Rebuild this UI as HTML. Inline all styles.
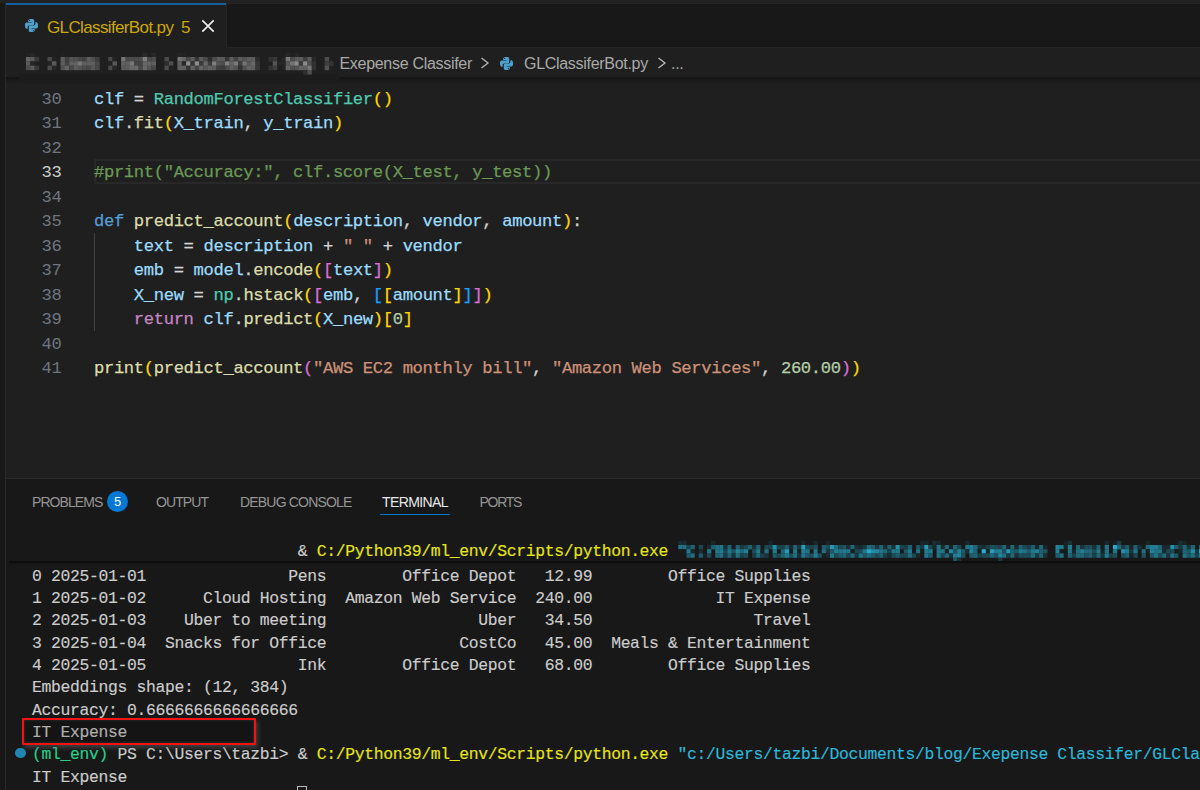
<!DOCTYPE html>
<html><head><meta charset="utf-8">
<style>
*{margin:0;padding:0;box-sizing:border-box}
html,body{width:1200px;height:790px;overflow:hidden;background:#181818}
body{position:relative;font-family:"Liberation Sans",sans-serif}
.abs{position:absolute}
#topstrip{left:0;top:0;width:1200px;height:3px;background:#222222}
#tabbar{left:0;top:3px;width:1200px;height:44px;background:#181818;border-top:1px solid #252525}
#leftstrip{left:0;top:3px;width:5px;height:787px;background:#181818}
#leftborder{left:5px;top:3px;width:1px;height:787px;background:#2b2b2b}
#tab{left:6px;top:3px;width:220px;height:44px;background:#1f1f1f;border-top:2px solid #14609f}
#tabr{left:226px;top:3px;width:1px;height:44px;background:#262626}
#tablabel{left:47px;top:18px;font-size:17px;letter-spacing:-0.63px;color:#cca700;white-space:pre;line-height:20px}
#tab5{left:181px;top:18px;font-size:17px;color:#cca700;line-height:20px}
#editor{left:6px;top:47px;width:1194px;height:431px;background:#1f1f1f}
#bcline{left:227px;top:47px;width:973px;height:1px;background:#262626}
#bcshadow{left:6px;top:77px;width:1194px;height:7px;background:linear-gradient(#141414,rgba(31,31,31,0))}
.bc{top:54px;font-size:16px;color:#a9a9a9;white-space:pre;line-height:20px;letter-spacing:-0.3px}
.code{font-family:"Liberation Mono",monospace;font-size:17.2px;letter-spacing:-0.36px;-webkit-text-stroke:0.25px currentColor;white-space:pre;line-height:24.5px;color:#d4d4d4}
.ln{left:41.5px;color:#6e7681;-webkit-text-stroke:0}.ln.act{color:#cccccc}
.cl{left:94px}
.v{color:#9cdcfe}.f{color:#dcdcaa}.c{color:#4ec9b0}.k{color:#569cd6}.r{color:#c586c0}.s{color:#ce9178}.n{color:#b5cea8}.cm{color:#6a9955}
.b1{color:#ffd700}.b2{color:#da70d6}.b3{color:#179fff}
#curline{left:94px;top:159px;width:1107px;height:25px;border:2px solid #282828;border-right:none}
#guide{left:94px;top:233px;width:1px;height:98px;background:#404040}
#panel{left:6px;top:478px;width:1194px;height:312px;background:#181818;border-top:1px solid #2b2b2b}
.ptab{top:493px;font-size:14px;letter-spacing:-0.6px;color:#959595;white-space:pre;line-height:18px}
#badge{left:107px;top:490.5px;width:21px;height:21px;border-radius:50%;background:#0078d4;color:#fff;font-size:13px;text-align:center;line-height:21px}
#tunder{left:380px;top:514px;width:70px;height:1px;background:#0078d4}
.term{font-family:"Liberation Mono",monospace;font-size:16.4px;letter-spacing:-0.342px;-webkit-text-stroke:0.15px currentColor;white-space:pre;line-height:22.35px;color:#cccccc;left:32px}
.ty{color:#e5e510}.tc{color:#29b8db}.tg{color:#23d18b}
#stickyshadow{left:9px;top:560.5px;width:1191px;height:3.5px;background:linear-gradient(#0b0b0b,#0d0d0d 45%,rgba(24,24,24,0))}
#redbox{left:22px;top:718px;width:234px;height:27px;border:2.5px solid #f21212;border-radius:1px;box-shadow:2px 3px 4px rgba(110,110,110,0.45), inset 0 0 3px rgba(90,90,90,0.5);background:rgba(0,0,0,0.15)}
#cursor{left:297px;top:786px;width:10px;height:10px;border:1px solid #bbbbbb}
#dot{left:14.9px;top:747.6px;width:10.8px;height:10.8px;border-radius:50%;background:#2185b3}
</style></head><body>
<div id="topstrip" class="abs"></div>
<div id="tabbar" class="abs"></div>
<div id="leftstrip" class="abs"></div>
<div id="leftborder" class="abs"></div>
<div id="tab" class="abs"></div>
<div id="tabr" class="abs"></div>
<svg class="abs" style="left:24px;top:18px" width="15" height="15" viewBox="0 0 16 16"><path fill="#4da0cc" d="M7.9 1C4.3 1 4.5 2.6 4.5 2.6V4.3h3.5v.5H3.1S1 4.5 1 8s1.8 3.4 1.8 3.4h1.1V9.8S3.8 8 5.7 8h3.4s1.8 0 1.8-1.8V2.8S11.2 1 7.9 1zM6 2a.6.6 0 110 1.2A.6.6 0 016 2z"/><path fill="#4da0cc" d="M8.1 15c3.6 0 3.4-1.6 3.4-1.6v-1.7H8v-.5h4.9S15 11.5 15 8s-1.8-3.4-1.8-3.4h-1.1v1.6S12.2 8 10.3 8H6.9S5.1 8 5.1 9.8v3.4S4.8 15 8.1 15zM10 14a.6.6 0 110-1.2.6.6 0 010 1.2z"/></svg>
<div id="tablabel" class="abs">GLClassiferBot.py</div>
<div id="tab5" class="abs">5</div>
<svg class="abs" style="left:200.5px;top:19px" width="14" height="14" viewBox="0 0 14 14"><path d="M1.3 1.3L12.7 12.7M12.7 1.3L1.3 12.7" stroke="#ececec" stroke-width="1.7"/></svg>

<div id="editor" class="abs"></div>
<div id="bcline" class="abs"></div>
<div id="bcshadow" class="abs"></div>
<div class="abs" style="left:19px;top:74px;width:320px;height:9px;background:#1c1c1c"></div><!--BCBLUR--><svg class="abs" style="left:0;top:0" width="340" height="90"><rect x="25.90" y="52.67" width="4.53" height="4.53" fill="#222222"/><rect x="30.23" y="52.67" width="4.53" height="4.53" fill="#262626"/><rect x="60.54" y="52.67" width="4.53" height="4.53" fill="#222222"/><rect x="142.81" y="52.67" width="4.53" height="4.53" fill="#292929"/><rect x="151.47" y="52.67" width="4.53" height="4.53" fill="#292929"/><rect x="177.45" y="52.67" width="4.53" height="4.53" fill="#252525"/><rect x="181.78" y="52.67" width="4.53" height="4.53" fill="#222222"/><rect x="285.70" y="52.67" width="4.53" height="4.53" fill="#272727"/><rect x="290.03" y="52.67" width="4.53" height="4.53" fill="#212121"/><rect x="294.36" y="52.67" width="4.53" height="4.53" fill="#262626"/><rect x="25.90" y="57.00" width="4.53" height="4.53" fill="#646464"/><rect x="30.23" y="57.00" width="4.53" height="4.53" fill="#5b5b5b"/><rect x="34.56" y="57.00" width="4.53" height="4.53" fill="#393939"/><rect x="47.55" y="57.00" width="4.53" height="4.53" fill="#494949"/><rect x="51.88" y="57.00" width="4.53" height="4.53" fill="#242424"/><rect x="60.54" y="57.00" width="4.53" height="4.53" fill="#5e5e5e"/><rect x="64.87" y="57.00" width="4.53" height="4.53" fill="#414141"/><rect x="69.20" y="57.00" width="4.53" height="4.53" fill="#565656"/><rect x="73.53" y="57.00" width="4.53" height="4.53" fill="#515151"/><rect x="77.86" y="57.00" width="4.53" height="4.53" fill="#474747"/><rect x="82.19" y="57.00" width="4.53" height="4.53" fill="#434343"/><rect x="86.52" y="57.00" width="4.53" height="4.53" fill="#5c5c5c"/><rect x="90.85" y="57.00" width="4.53" height="4.53" fill="#4f4f4f"/><rect x="95.18" y="57.00" width="4.53" height="4.53" fill="#3d3d3d"/><rect x="108.17" y="57.00" width="4.53" height="4.53" fill="#474747"/><rect x="112.50" y="57.00" width="4.53" height="4.53" fill="#222222"/><rect x="121.16" y="57.00" width="4.53" height="4.53" fill="#767676"/><rect x="125.49" y="57.00" width="4.53" height="4.53" fill="#494949"/><rect x="129.82" y="57.00" width="4.53" height="4.53" fill="#4b4b4b"/><rect x="134.15" y="57.00" width="4.53" height="4.53" fill="#4b4b4b"/><rect x="138.48" y="57.00" width="4.53" height="4.53" fill="#4d4d4d"/><rect x="142.81" y="57.00" width="4.53" height="4.53" fill="#7f7f7f"/><rect x="147.14" y="57.00" width="4.53" height="4.53" fill="#494949"/><rect x="151.47" y="57.00" width="4.53" height="4.53" fill="#4d4d4d"/><rect x="164.46" y="57.00" width="4.53" height="4.53" fill="#494949"/><rect x="177.45" y="57.00" width="4.53" height="4.53" fill="#747474"/><rect x="181.78" y="57.00" width="4.53" height="4.53" fill="#646464"/><rect x="186.11" y="57.00" width="4.53" height="4.53" fill="#484848"/><rect x="190.44" y="57.00" width="4.53" height="4.53" fill="#5c5c5c"/><rect x="194.77" y="57.00" width="4.53" height="4.53" fill="#343434"/><rect x="199.10" y="57.00" width="4.53" height="4.53" fill="#5c5c5c"/><rect x="203.43" y="57.00" width="4.53" height="4.53" fill="#494949"/><rect x="207.76" y="57.00" width="4.53" height="4.53" fill="#2d2d2d"/><rect x="212.09" y="57.00" width="4.53" height="4.53" fill="#4b4b4b"/><rect x="216.42" y="57.00" width="4.53" height="4.53" fill="#5c5c5c"/><rect x="220.75" y="57.00" width="4.53" height="4.53" fill="#595959"/><rect x="225.08" y="57.00" width="4.53" height="4.53" fill="#353535"/><rect x="229.41" y="57.00" width="4.53" height="4.53" fill="#5c5c5c"/><rect x="233.74" y="57.00" width="4.53" height="4.53" fill="#424242"/><rect x="238.07" y="57.00" width="4.53" height="4.53" fill="#5b5b5b"/><rect x="242.40" y="57.00" width="4.53" height="4.53" fill="#525252"/><rect x="246.73" y="57.00" width="4.53" height="4.53" fill="#5f5f5f"/><rect x="251.06" y="57.00" width="4.53" height="4.53" fill="#5c5c5c"/><rect x="255.39" y="57.00" width="4.53" height="4.53" fill="#2c2c2c"/><rect x="268.38" y="57.00" width="4.53" height="4.53" fill="#313131"/><rect x="272.71" y="57.00" width="4.53" height="4.53" fill="#393939"/><rect x="281.37" y="57.00" width="4.53" height="4.53" fill="#262626"/><rect x="285.70" y="57.00" width="4.53" height="4.53" fill="#797979"/><rect x="290.03" y="57.00" width="4.53" height="4.53" fill="#4c4c4c"/><rect x="294.36" y="57.00" width="4.53" height="4.53" fill="#5a5a5a"/><rect x="298.69" y="57.00" width="4.53" height="4.53" fill="#5c5c5c"/><rect x="303.02" y="57.00" width="4.53" height="4.53" fill="#3e3e3e"/><rect x="307.35" y="57.00" width="4.53" height="4.53" fill="#5b5b5b"/><rect x="311.68" y="57.00" width="4.53" height="4.53" fill="#282828"/><rect x="324.67" y="57.00" width="4.53" height="4.53" fill="#4c4c4c"/><rect x="25.90" y="61.33" width="4.53" height="4.53" fill="#595959"/><rect x="30.23" y="61.33" width="4.53" height="4.53" fill="#272727"/><rect x="47.55" y="61.33" width="4.53" height="4.53" fill="#232323"/><rect x="51.88" y="61.33" width="4.53" height="4.53" fill="#5b5b5b"/><rect x="60.54" y="61.33" width="4.53" height="4.53" fill="#5f5f5f"/><rect x="64.87" y="61.33" width="4.53" height="4.53" fill="#434343"/><rect x="69.20" y="61.33" width="4.53" height="4.53" fill="#616161"/><rect x="73.53" y="61.33" width="4.53" height="4.53" fill="#626262"/><rect x="77.86" y="61.33" width="4.53" height="4.53" fill="#787878"/><rect x="82.19" y="61.33" width="4.53" height="4.53" fill="#5f5f5f"/><rect x="86.52" y="61.33" width="4.53" height="4.53" fill="#5e5e5e"/><rect x="90.85" y="61.33" width="4.53" height="4.53" fill="#5e5e5e"/><rect x="95.18" y="61.33" width="4.53" height="4.53" fill="#494949"/><rect x="108.17" y="61.33" width="4.53" height="4.53" fill="#222222"/><rect x="112.50" y="61.33" width="4.53" height="4.53" fill="#575757"/><rect x="121.16" y="61.33" width="4.53" height="4.53" fill="#626262"/><rect x="125.49" y="61.33" width="4.53" height="4.53" fill="#606060"/><rect x="129.82" y="61.33" width="4.53" height="4.53" fill="#787878"/><rect x="134.15" y="61.33" width="4.53" height="4.53" fill="#464646"/><rect x="138.48" y="61.33" width="4.53" height="4.53" fill="#454545"/><rect x="142.81" y="61.33" width="4.53" height="4.53" fill="#666666"/><rect x="147.14" y="61.33" width="4.53" height="4.53" fill="#656565"/><rect x="151.47" y="61.33" width="4.53" height="4.53" fill="#5f5f5f"/><rect x="164.46" y="61.33" width="4.53" height="4.53" fill="#2e2e2e"/><rect x="168.79" y="61.33" width="4.53" height="4.53" fill="#4e4e4e"/><rect x="177.45" y="61.33" width="4.53" height="4.53" fill="#616161"/><rect x="181.78" y="61.33" width="4.53" height="4.53" fill="#292929"/><rect x="186.11" y="61.33" width="4.53" height="4.53" fill="#8d8d8d"/><rect x="190.44" y="61.33" width="4.53" height="4.53" fill="#363636"/><rect x="194.77" y="61.33" width="4.53" height="4.53" fill="#8d8d8d"/><rect x="199.10" y="61.33" width="4.53" height="4.53" fill="#3b3b3b"/><rect x="203.43" y="61.33" width="4.53" height="4.53" fill="#696969"/><rect x="207.76" y="61.33" width="4.53" height="4.53" fill="#3e3e3e"/><rect x="212.09" y="61.33" width="4.53" height="4.53" fill="#7e7e7e"/><rect x="216.42" y="61.33" width="4.53" height="4.53" fill="#545454"/><rect x="220.75" y="61.33" width="4.53" height="4.53" fill="#4f4f4f"/><rect x="225.08" y="61.33" width="4.53" height="4.53" fill="#808080"/><rect x="229.41" y="61.33" width="4.53" height="4.53" fill="#636363"/><rect x="233.74" y="61.33" width="4.53" height="4.53" fill="#797979"/><rect x="238.07" y="61.33" width="4.53" height="4.53" fill="#3f3f3f"/><rect x="242.40" y="61.33" width="4.53" height="4.53" fill="#747474"/><rect x="246.73" y="61.33" width="4.53" height="4.53" fill="#575757"/><rect x="251.06" y="61.33" width="4.53" height="4.53" fill="#696969"/><rect x="255.39" y="61.33" width="4.53" height="4.53" fill="#363636"/><rect x="272.71" y="61.33" width="4.53" height="4.53" fill="#545454"/><rect x="277.04" y="61.33" width="4.53" height="4.53" fill="#262626"/><rect x="281.37" y="61.33" width="4.53" height="4.53" fill="#262626"/><rect x="285.70" y="61.33" width="4.53" height="4.53" fill="#575757"/><rect x="290.03" y="61.33" width="4.53" height="4.53" fill="#737373"/><rect x="294.36" y="61.33" width="4.53" height="4.53" fill="#8a8a8a"/><rect x="298.69" y="61.33" width="4.53" height="4.53" fill="#3b3b3b"/><rect x="303.02" y="61.33" width="4.53" height="4.53" fill="#898989"/><rect x="307.35" y="61.33" width="4.53" height="4.53" fill="#4e4e4e"/><rect x="311.68" y="61.33" width="4.53" height="4.53" fill="#323232"/><rect x="324.67" y="61.33" width="4.53" height="4.53" fill="#3e3e3e"/><rect x="329.00" y="61.33" width="4.53" height="4.53" fill="#353535"/><rect x="25.90" y="65.66" width="4.53" height="4.53" fill="#4f4f4f"/><rect x="30.23" y="65.66" width="4.53" height="4.53" fill="#5b5b5b"/><rect x="34.56" y="65.66" width="4.53" height="4.53" fill="#393939"/><rect x="47.55" y="65.66" width="4.53" height="4.53" fill="#4c4c4c"/><rect x="51.88" y="65.66" width="4.53" height="4.53" fill="#282828"/><rect x="60.54" y="65.66" width="4.53" height="4.53" fill="#515151"/><rect x="64.87" y="65.66" width="4.53" height="4.53" fill="#626262"/><rect x="69.20" y="65.66" width="4.53" height="4.53" fill="#484848"/><rect x="73.53" y="65.66" width="4.53" height="4.53" fill="#5d5d5d"/><rect x="77.86" y="65.66" width="4.53" height="4.53" fill="#535353"/><rect x="82.19" y="65.66" width="4.53" height="4.53" fill="#4c4c4c"/><rect x="86.52" y="65.66" width="4.53" height="4.53" fill="#464646"/><rect x="90.85" y="65.66" width="4.53" height="4.53" fill="#585858"/><rect x="95.18" y="65.66" width="4.53" height="4.53" fill="#484848"/><rect x="108.17" y="65.66" width="4.53" height="4.53" fill="#494949"/><rect x="112.50" y="65.66" width="4.53" height="4.53" fill="#272727"/><rect x="121.16" y="65.66" width="4.53" height="4.53" fill="#5b5b5b"/><rect x="125.49" y="65.66" width="4.53" height="4.53" fill="#5e5e5e"/><rect x="129.82" y="65.66" width="4.53" height="4.53" fill="#696969"/><rect x="134.15" y="65.66" width="4.53" height="4.53" fill="#6b6b6b"/><rect x="138.48" y="65.66" width="4.53" height="4.53" fill="#484848"/><rect x="142.81" y="65.66" width="4.53" height="4.53" fill="#686868"/><rect x="147.14" y="65.66" width="4.53" height="4.53" fill="#555555"/><rect x="151.47" y="65.66" width="4.53" height="4.53" fill="#484848"/><rect x="164.46" y="65.66" width="4.53" height="4.53" fill="#4d4d4d"/><rect x="168.79" y="65.66" width="4.53" height="4.53" fill="#222222"/><rect x="177.45" y="65.66" width="4.53" height="4.53" fill="#606060"/><rect x="181.78" y="65.66" width="4.53" height="4.53" fill="#606060"/><rect x="186.11" y="65.66" width="4.53" height="4.53" fill="#363636"/><rect x="190.44" y="65.66" width="4.53" height="4.53" fill="#626262"/><rect x="194.77" y="65.66" width="4.53" height="4.53" fill="#454545"/><rect x="199.10" y="65.66" width="4.53" height="4.53" fill="#656565"/><rect x="203.43" y="65.66" width="4.53" height="4.53" fill="#575757"/><rect x="207.76" y="65.66" width="4.53" height="4.53" fill="#626262"/><rect x="212.09" y="65.66" width="4.53" height="4.53" fill="#5c5c5c"/><rect x="216.42" y="65.66" width="4.53" height="4.53" fill="#404040"/><rect x="220.75" y="65.66" width="4.53" height="4.53" fill="#3c3c3c"/><rect x="225.08" y="65.66" width="4.53" height="4.53" fill="#4c4c4c"/><rect x="229.41" y="65.66" width="4.53" height="4.53" fill="#606060"/><rect x="233.74" y="65.66" width="4.53" height="4.53" fill="#545454"/><rect x="238.07" y="65.66" width="4.53" height="4.53" fill="#323232"/><rect x="242.40" y="65.66" width="4.53" height="4.53" fill="#525252"/><rect x="246.73" y="65.66" width="4.53" height="4.53" fill="#636363"/><rect x="251.06" y="65.66" width="4.53" height="4.53" fill="#5e5e5e"/><rect x="255.39" y="65.66" width="4.53" height="4.53" fill="#373737"/><rect x="268.38" y="65.66" width="4.53" height="4.53" fill="#313131"/><rect x="272.71" y="65.66" width="4.53" height="4.53" fill="#404040"/><rect x="281.37" y="65.66" width="4.53" height="4.53" fill="#242424"/><rect x="285.70" y="65.66" width="4.53" height="4.53" fill="#666666"/><rect x="290.03" y="65.66" width="4.53" height="4.53" fill="#515151"/><rect x="294.36" y="65.66" width="4.53" height="4.53" fill="#535353"/><rect x="298.69" y="65.66" width="4.53" height="4.53" fill="#636363"/><rect x="303.02" y="65.66" width="4.53" height="4.53" fill="#5f5f5f"/><rect x="307.35" y="65.66" width="4.53" height="4.53" fill="#777777"/><rect x="311.68" y="65.66" width="4.53" height="4.53" fill="#303030"/><rect x="324.67" y="65.66" width="4.53" height="4.53" fill="#535353"/><rect x="303.02" y="69.99" width="4.53" height="4.53" fill="#2e2e2e"/><rect x="307.35" y="69.99" width="4.53" height="4.53" fill="#4e4e4e"/></svg><!--/BCBLUR-->
<div class="abs bc" style="left:339.5px">Exepense Classifer</div>
<div class="abs bc" style="left:524px">GLClassiferBot.py</div>
<svg class="abs" style="left:479px;top:56px" width="12" height="14" viewBox="0 0 12 14"><path d="M2.5 2L9 7L2.5 12" fill="none" stroke="#b8b8b8" stroke-width="1.3"/></svg>
<svg class="abs" style="left:499px;top:56px" width="15" height="15" viewBox="0 0 16 16"><path fill="#4da0cc" d="M7.9 1C4.3 1 4.5 2.6 4.5 2.6V4.3h3.5v.5H3.1S1 4.5 1 8s1.8 3.4 1.8 3.4h1.1V9.8S3.8 8 5.7 8h3.4s1.8 0 1.8-1.8V2.8S11.2 1 7.9 1zM6 2a.6.6 0 110 1.2A.6.6 0 016 2z"/><path fill="#4da0cc" d="M8.1 15c3.6 0 3.4-1.6 3.4-1.6v-1.7H8v-.5h4.9S15 11.5 15 8s-1.8-3.4-1.8-3.4h-1.1v1.6S12.2 8 10.3 8H6.9S5.1 8 5.1 9.8v3.4S4.8 15 8.1 15zM10 14a.6.6 0 110-1.2.6.6 0 010 1.2z"/></svg>
<svg class="abs" style="left:656px;top:56px" width="12" height="14" viewBox="0 0 12 14"><path d="M2.5 2L9 7L2.5 12" fill="none" stroke="#b8b8b8" stroke-width="1.3"/></svg>
<div class="abs bc" style="left:671px">...</div>


<div id="curline" class="abs"></div>
<div id="guide" class="abs"></div>
<!--CODE-->
<div class="abs code ln" style="top:87.57px">30</div>
<div class="abs code cl" style="top:87.57px"><span class="v">clf</span> = <span class="c">RandomForestClassifier</span><span class="b1">()</span></div>
<div class="abs code ln" style="top:112.07px">31</div>
<div class="abs code cl" style="top:112.07px"><span class="v">clf</span>.<span class="f">fit</span><span class="b1">(</span><span class="v">X_train</span>, <span class="v">y_train</span><span class="b1">)</span></div>
<div class="abs code ln" style="top:136.57px">32</div>
<div class="abs code ln act" style="top:161.07px">33</div>
<div class="abs code cl" style="top:161.07px"><span class="cm">#print(&quot;Accuracy:&quot;, clf.score(X_test, y_test))</span></div>
<div class="abs code ln" style="top:185.57px">34</div>
<div class="abs code ln" style="top:210.07px">35</div>
<div class="abs code cl" style="top:210.07px"><span class="k">def</span> <span class="f">predict_account</span><span class="b1">(</span><span class="v">description</span>, <span class="v">vendor</span>, <span class="v">amount</span><span class="b1">)</span>:</div>
<div class="abs code ln" style="top:234.57px">36</div>
<div class="abs code cl" style="top:234.57px">    <span class="v">text</span> = <span class="v">description</span> + <span class="s">&quot; &quot;</span> + <span class="v">vendor</span></div>
<div class="abs code ln" style="top:259.07px">37</div>
<div class="abs code cl" style="top:259.07px">    <span class="v">emb</span> = <span class="v">model</span>.<span class="f">encode</span><span class="b1">(</span><span class="b2">[</span><span class="v">text</span><span class="b2">]</span><span class="b1">)</span></div>
<div class="abs code ln" style="top:283.57px">38</div>
<div class="abs code cl" style="top:283.57px">    <span class="v">X_new</span> = <span class="c">np</span>.<span class="f">hstack</span><span class="b1">(</span><span class="b2">[</span><span class="v">emb</span>, <span class="b3">[</span><span class="b1">[</span><span class="v">amount</span><span class="b1">]</span><span class="b3">]</span><span class="b2">]</span><span class="b1">)</span></div>
<div class="abs code ln" style="top:308.07px">39</div>
<div class="abs code cl" style="top:308.07px">    <span class="r">return</span> <span class="v">clf</span>.<span class="f">predict</span><span class="b1">(</span><span class="v">X_new</span><span class="b1">)</span><span class="b1">[</span><span class="n">0</span><span class="b1">]</span></div>
<div class="abs code ln" style="top:332.57px">40</div>
<div class="abs code ln" style="top:357.07px">41</div>
<div class="abs code cl" style="top:357.07px"><span class="f">print</span><span class="b1">(</span><span class="f">predict_account</span><span class="b2">(</span><span class="s">&quot;AWS EC2 monthly bill&quot;</span>, <span class="s">&quot;Amazon Web Services&quot;</span>, <span class="n">260.00</span><span class="b2">)</span><span class="b1">)</span></div>
<!--/CODE-->

<div id="panel" class="abs"></div>
<div class="abs ptab" style="left:32px;letter-spacing:-0.94px">PROBLEMS</div>
<div id="badge" class="abs">5</div>
<div class="abs ptab" style="left:156px;letter-spacing:-0.92px">OUTPUT</div>
<div class="abs ptab" style="left:240px;letter-spacing:-0.81px">DEBUG CONSOLE</div>
<div class="abs ptab" style="left:382px;color:#e7e7e7">TERMINAL</div>
<div class="abs ptab" style="left:479.5px;letter-spacing:-1.26px">PORTS</div>
<div id="tunder" class="abs"></div>

<!--TERM-->
<div class="abs term" style="top:540.96px">                            &amp; <span class="ty">C:/Python39/ml_env/Scripts/python.exe</span> </div>
<div class="abs term" style="top:565.56px">0 2025-01-01               Pens        Office Depot   12.99        Office Supplies</div>
<div class="abs term" style="top:587.91px">1 2025-01-02      Cloud Hosting  Amazon Web Service  240.00             IT Expense</div>
<div class="abs term" style="top:610.26px">2 2025-01-03    Uber to meeting                Uber   34.50                 Travel</div>
<div class="abs term" style="top:632.61px">3 2025-01-04  Snacks for Office              CostCo   45.00  Meals &amp; Entertainment</div>
<div class="abs term" style="top:654.96px">4 2025-01-05                Ink        Office Depot   68.00        Office Supplies</div>
<div class="abs term" style="top:677.31px">Embeddings shape: (12, 384)</div>
<div class="abs term" style="top:699.66px">Accuracy: 0.6666666666666666</div>
<div class="abs term" style="top:722.01px">IT Expense</div>
<div class="abs term" style="top:744.36px"><span class="tg">(ml_env)</span> PS C:\Users\tazbi&gt; &amp; <span class="ty">C:/Python39/ml_env/Scripts/python.exe</span> <span class="tc">&quot;c:/Users/tazbi/Documents/blog/Exepense Classifer/GLClassiferBot.py&quot;</span></div>
<div class="abs term" style="top:766.71px">IT Expense</div>
<!--/TERM-->
<!--TBLUR--><svg class="abs" style="left:0;top:0" width="1200" height="600"><rect x="678.30" y="540.80" width="4.30" height="4.40" fill="#1a2c30"/><rect x="682.40" y="540.80" width="4.30" height="4.40" fill="#1a2a2f"/><rect x="711.10" y="540.80" width="4.30" height="4.40" fill="#19282c"/><rect x="768.50" y="540.80" width="4.30" height="4.40" fill="#19282c"/><rect x="801.30" y="540.80" width="4.30" height="4.40" fill="#19282c"/><rect x="813.60" y="540.80" width="4.30" height="4.40" fill="#19292d"/><rect x="825.90" y="540.80" width="4.30" height="4.40" fill="#19262a"/><rect x="920.20" y="540.80" width="4.30" height="4.40" fill="#19282b"/><rect x="924.30" y="540.80" width="4.30" height="4.40" fill="#19272b"/><rect x="932.50" y="540.80" width="4.30" height="4.40" fill="#1a2f34"/><rect x="936.60" y="540.80" width="4.30" height="4.40" fill="#19262a"/><rect x="965.30" y="540.80" width="4.30" height="4.40" fill="#19282c"/><rect x="1063.70" y="540.80" width="4.30" height="4.40" fill="#192326"/><rect x="1067.80" y="540.80" width="4.30" height="4.40" fill="#1a3137"/><rect x="1104.70" y="540.80" width="4.30" height="4.40" fill="#19292d"/><rect x="1112.90" y="540.80" width="4.30" height="4.40" fill="#181f21"/><rect x="1117.00" y="540.80" width="4.30" height="4.40" fill="#1b3c43"/><rect x="1145.70" y="540.80" width="4.30" height="4.40" fill="#19272a"/><rect x="1178.50" y="540.80" width="4.30" height="4.40" fill="#1a3137"/><rect x="1182.60" y="540.80" width="4.30" height="4.40" fill="#192427"/><rect x="678.30" y="545.00" width="4.30" height="4.40" fill="#217589"/><rect x="682.40" y="545.00" width="4.30" height="4.40" fill="#217083"/><rect x="686.50" y="545.00" width="4.30" height="4.40" fill="#1c414a"/><rect x="690.60" y="545.00" width="4.30" height="4.40" fill="#1f6171"/><rect x="698.80" y="545.00" width="4.30" height="4.40" fill="#1c4650"/><rect x="707.00" y="545.00" width="4.30" height="4.40" fill="#1a2b2f"/><rect x="711.10" y="545.00" width="4.30" height="4.40" fill="#1f6172"/><rect x="715.20" y="545.00" width="4.30" height="4.40" fill="#217083"/><rect x="719.30" y="545.00" width="4.30" height="4.40" fill="#217589"/><rect x="723.40" y="545.00" width="4.30" height="4.40" fill="#1a3035"/><rect x="727.50" y="545.00" width="4.30" height="4.40" fill="#206374"/><rect x="731.60" y="545.00" width="4.30" height="4.40" fill="#181e1f"/><rect x="735.70" y="545.00" width="4.30" height="4.40" fill="#1f6170"/><rect x="739.80" y="545.00" width="4.30" height="4.40" fill="#1b383f"/><rect x="743.90" y="545.00" width="4.30" height="4.40" fill="#1c444e"/><rect x="748.00" y="545.00" width="4.30" height="4.40" fill="#1f6070"/><rect x="752.10" y="545.00" width="4.30" height="4.40" fill="#1a3237"/><rect x="756.20" y="545.00" width="4.30" height="4.40" fill="#1f6272"/><rect x="764.40" y="545.00" width="4.30" height="4.40" fill="#1d4852"/><rect x="768.50" y="545.00" width="4.30" height="4.40" fill="#1c424b"/><rect x="772.60" y="545.00" width="4.30" height="4.40" fill="#248fa9"/><rect x="776.70" y="545.00" width="4.30" height="4.40" fill="#1c434c"/><rect x="780.80" y="545.00" width="4.30" height="4.40" fill="#1c4049"/><rect x="784.90" y="545.00" width="4.30" height="4.40" fill="#1e5967"/><rect x="789.00" y="545.00" width="4.30" height="4.40" fill="#1a2b2f"/><rect x="793.10" y="545.00" width="4.30" height="4.40" fill="#206373"/><rect x="797.20" y="545.00" width="4.30" height="4.40" fill="#1b3840"/><rect x="801.30" y="545.00" width="4.30" height="4.40" fill="#269dbb"/><rect x="805.40" y="545.00" width="4.30" height="4.40" fill="#1d4954"/><rect x="809.50" y="545.00" width="4.30" height="4.40" fill="#1c444e"/><rect x="813.60" y="545.00" width="4.30" height="4.40" fill="#1d4f5b"/><rect x="821.80" y="545.00" width="4.30" height="4.40" fill="#1f6070"/><rect x="825.90" y="545.00" width="4.30" height="4.40" fill="#1d4a55"/><rect x="830.00" y="545.00" width="4.30" height="4.40" fill="#2595b0"/><rect x="834.10" y="545.00" width="4.30" height="4.40" fill="#216d80"/><rect x="838.20" y="545.00" width="4.30" height="4.40" fill="#1d4853"/><rect x="842.30" y="545.00" width="4.30" height="4.40" fill="#1e5461"/><rect x="846.40" y="545.00" width="4.30" height="4.40" fill="#1a3035"/><rect x="850.50" y="545.00" width="4.30" height="4.40" fill="#20687a"/><rect x="854.60" y="545.00" width="4.30" height="4.40" fill="#1a2f34"/><rect x="858.70" y="545.00" width="4.30" height="4.40" fill="#1a2b2f"/><rect x="862.80" y="545.00" width="4.30" height="4.40" fill="#1b3b43"/><rect x="866.90" y="545.00" width="4.30" height="4.40" fill="#206c7e"/><rect x="871.00" y="545.00" width="4.30" height="4.40" fill="#1f5b6a"/><rect x="875.10" y="545.00" width="4.30" height="4.40" fill="#1b383f"/><rect x="879.20" y="545.00" width="4.30" height="4.40" fill="#1f6171"/><rect x="883.30" y="545.00" width="4.30" height="4.40" fill="#1a2d32"/><rect x="887.40" y="545.00" width="4.30" height="4.40" fill="#1f6172"/><rect x="891.50" y="545.00" width="4.30" height="4.40" fill="#1a3238"/><rect x="895.60" y="545.00" width="4.30" height="4.40" fill="#248fa9"/><rect x="899.70" y="545.00" width="4.30" height="4.40" fill="#1c434c"/><rect x="903.80" y="545.00" width="4.30" height="4.40" fill="#1b3b43"/><rect x="907.90" y="545.00" width="4.30" height="4.40" fill="#1f5f6f"/><rect x="916.10" y="545.00" width="4.30" height="4.40" fill="#1e5663"/><rect x="920.20" y="545.00" width="4.30" height="4.40" fill="#1b3a42"/><rect x="924.30" y="545.00" width="4.30" height="4.40" fill="#269dba"/><rect x="928.40" y="545.00" width="4.30" height="4.40" fill="#1d4752"/><rect x="932.50" y="545.00" width="4.30" height="4.40" fill="#19282b"/><rect x="936.60" y="545.00" width="4.30" height="4.40" fill="#22768a"/><rect x="940.70" y="545.00" width="4.30" height="4.40" fill="#1a2c30"/><rect x="944.80" y="545.00" width="4.30" height="4.40" fill="#206879"/><rect x="948.90" y="545.00" width="4.30" height="4.40" fill="#192225"/><rect x="953.00" y="545.00" width="4.30" height="4.40" fill="#206475"/><rect x="957.10" y="545.00" width="4.30" height="4.40" fill="#1c4751"/><rect x="965.30" y="545.00" width="4.30" height="4.40" fill="#217589"/><rect x="969.40" y="545.00" width="4.30" height="4.40" fill="#238097"/><rect x="973.50" y="545.00" width="4.30" height="4.40" fill="#20697b"/><rect x="977.60" y="545.00" width="4.30" height="4.40" fill="#1b373d"/><rect x="981.70" y="545.00" width="4.30" height="4.40" fill="#1a2f34"/><rect x="985.80" y="545.00" width="4.30" height="4.40" fill="#1b3d45"/><rect x="989.90" y="545.00" width="4.30" height="4.40" fill="#1d4f5b"/><rect x="994.00" y="545.00" width="4.30" height="4.40" fill="#1d4a55"/><rect x="998.10" y="545.00" width="4.30" height="4.40" fill="#1c434c"/><rect x="1002.20" y="545.00" width="4.30" height="4.40" fill="#206677"/><rect x="1006.30" y="545.00" width="4.30" height="4.40" fill="#192325"/><rect x="1010.40" y="545.00" width="4.30" height="4.40" fill="#206778"/><rect x="1014.50" y="545.00" width="4.30" height="4.40" fill="#19272a"/><rect x="1018.60" y="545.00" width="4.30" height="4.40" fill="#1f6070"/><rect x="1022.70" y="545.00" width="4.30" height="4.40" fill="#1d4a55"/><rect x="1026.80" y="545.00" width="4.30" height="4.40" fill="#1c4048"/><rect x="1030.90" y="545.00" width="4.30" height="4.40" fill="#1f5b6a"/><rect x="1035.00" y="545.00" width="4.30" height="4.40" fill="#19272a"/><rect x="1039.10" y="545.00" width="4.30" height="4.40" fill="#206779"/><rect x="1043.20" y="545.00" width="4.30" height="4.40" fill="#192629"/><rect x="1055.50" y="545.00" width="4.30" height="4.40" fill="#23849c"/><rect x="1059.60" y="545.00" width="4.30" height="4.40" fill="#227b91"/><rect x="1063.70" y="545.00" width="4.30" height="4.40" fill="#192224"/><rect x="1067.80" y="545.00" width="4.30" height="4.40" fill="#227d93"/><rect x="1076.00" y="545.00" width="4.30" height="4.40" fill="#206778"/><rect x="1080.10" y="545.00" width="4.30" height="4.40" fill="#1a3238"/><rect x="1084.20" y="545.00" width="4.30" height="4.40" fill="#1d4a55"/><rect x="1088.30" y="545.00" width="4.30" height="4.40" fill="#1d4e5a"/><rect x="1092.40" y="545.00" width="4.30" height="4.40" fill="#1a3237"/><rect x="1096.50" y="545.00" width="4.30" height="4.40" fill="#1f6272"/><rect x="1100.60" y="545.00" width="4.30" height="4.40" fill="#181c1d"/><rect x="1104.70" y="545.00" width="4.30" height="4.40" fill="#217488"/><rect x="1112.90" y="545.00" width="4.30" height="4.40" fill="#27a8c8"/><rect x="1117.00" y="545.00" width="4.30" height="4.40" fill="#206779"/><rect x="1121.10" y="545.00" width="4.30" height="4.40" fill="#1b3d45"/><rect x="1125.20" y="545.00" width="4.30" height="4.40" fill="#1f5c6b"/><rect x="1129.30" y="545.00" width="4.30" height="4.40" fill="#192427"/><rect x="1133.40" y="545.00" width="4.30" height="4.40" fill="#1f6171"/><rect x="1137.50" y="545.00" width="4.30" height="4.40" fill="#1a343a"/><rect x="1141.60" y="545.00" width="4.30" height="4.40" fill="#181d1f"/><rect x="1145.70" y="545.00" width="4.30" height="4.40" fill="#206a7c"/><rect x="1149.80" y="545.00" width="4.30" height="4.40" fill="#227f95"/><rect x="1153.90" y="545.00" width="4.30" height="4.40" fill="#227c92"/><rect x="1158.00" y="545.00" width="4.30" height="4.40" fill="#206474"/><rect x="1162.10" y="545.00" width="4.30" height="4.40" fill="#192a2e"/><rect x="1166.20" y="545.00" width="4.30" height="4.40" fill="#1a2b2f"/><rect x="1170.30" y="545.00" width="4.30" height="4.40" fill="#248fa9"/><rect x="1174.40" y="545.00" width="4.30" height="4.40" fill="#1f5e6e"/><rect x="1178.50" y="545.00" width="4.30" height="4.40" fill="#1b373e"/><rect x="1182.60" y="545.00" width="4.30" height="4.40" fill="#206678"/><rect x="1186.70" y="545.00" width="4.30" height="4.40" fill="#1b343b"/><rect x="1190.80" y="545.00" width="4.30" height="4.40" fill="#206576"/><rect x="1199.00" y="545.00" width="4.30" height="4.40" fill="#206373"/><rect x="678.30" y="549.20" width="4.30" height="4.40" fill="#181c1d"/><rect x="682.40" y="549.20" width="4.30" height="4.40" fill="#181c1d"/><rect x="686.50" y="549.20" width="4.30" height="4.40" fill="#227a90"/><rect x="690.60" y="549.20" width="4.30" height="4.40" fill="#19272a"/><rect x="698.80" y="549.20" width="4.30" height="4.40" fill="#1a2d32"/><rect x="707.00" y="549.20" width="4.30" height="4.40" fill="#217589"/><rect x="715.20" y="549.20" width="4.30" height="4.40" fill="#22768a"/><rect x="719.30" y="549.20" width="4.30" height="4.40" fill="#227b91"/><rect x="723.40" y="549.20" width="4.30" height="4.40" fill="#1d4853"/><rect x="727.50" y="549.20" width="4.30" height="4.40" fill="#22778b"/><rect x="731.60" y="549.20" width="4.30" height="4.40" fill="#1e5360"/><rect x="735.70" y="549.20" width="4.30" height="4.40" fill="#23859d"/><rect x="739.80" y="549.20" width="4.30" height="4.40" fill="#20687a"/><rect x="743.90" y="549.20" width="4.30" height="4.40" fill="#237f96"/><rect x="752.10" y="549.20" width="4.30" height="4.40" fill="#1d4b56"/><rect x="756.20" y="549.20" width="4.30" height="4.40" fill="#22788d"/><rect x="760.30" y="549.20" width="4.30" height="4.40" fill="#192326"/><rect x="764.40" y="549.20" width="4.30" height="4.40" fill="#217084"/><rect x="772.60" y="549.20" width="4.30" height="4.40" fill="#21768a"/><rect x="780.80" y="549.20" width="4.30" height="4.40" fill="#206576"/><rect x="784.90" y="549.20" width="4.30" height="4.40" fill="#2598b4"/><rect x="793.10" y="549.20" width="4.30" height="4.40" fill="#22768b"/><rect x="797.20" y="549.20" width="4.30" height="4.40" fill="#192123"/><rect x="801.30" y="549.20" width="4.30" height="4.40" fill="#227f96"/><rect x="805.40" y="549.20" width="4.30" height="4.40" fill="#217489"/><rect x="813.60" y="549.20" width="4.30" height="4.40" fill="#22768a"/><rect x="817.70" y="549.20" width="4.30" height="4.40" fill="#181d1f"/><rect x="821.80" y="549.20" width="4.30" height="4.40" fill="#217083"/><rect x="825.90" y="549.20" width="4.30" height="4.40" fill="#1b383f"/><rect x="830.00" y="549.20" width="4.30" height="4.40" fill="#1f5968"/><rect x="834.10" y="549.20" width="4.30" height="4.40" fill="#227d93"/><rect x="838.20" y="549.20" width="4.30" height="4.40" fill="#21758a"/><rect x="842.30" y="549.20" width="4.30" height="4.40" fill="#227b91"/><rect x="846.40" y="549.20" width="4.30" height="4.40" fill="#217489"/><rect x="850.50" y="549.20" width="4.30" height="4.40" fill="#181e20"/><rect x="854.60" y="549.20" width="4.30" height="4.40" fill="#1d4954"/><rect x="858.70" y="549.20" width="4.30" height="4.40" fill="#1d4b57"/><rect x="862.80" y="549.20" width="4.30" height="4.40" fill="#22778b"/><rect x="866.90" y="549.20" width="4.30" height="4.40" fill="#27a9c9"/><rect x="871.00" y="549.20" width="4.30" height="4.40" fill="#248ca5"/><rect x="875.10" y="549.20" width="4.30" height="4.40" fill="#248aa3"/><rect x="879.20" y="549.20" width="4.30" height="4.40" fill="#21758a"/><rect x="883.30" y="549.20" width="4.30" height="4.40" fill="#206779"/><rect x="887.40" y="549.20" width="4.30" height="4.40" fill="#1c414a"/><rect x="891.50" y="549.20" width="4.30" height="4.40" fill="#22778c"/><rect x="895.60" y="549.20" width="4.30" height="4.40" fill="#21768a"/><rect x="903.80" y="549.20" width="4.30" height="4.40" fill="#1e5664"/><rect x="907.90" y="549.20" width="4.30" height="4.40" fill="#22798e"/><rect x="912.00" y="549.20" width="4.30" height="4.40" fill="#181b1b"/><rect x="916.10" y="549.20" width="4.30" height="4.40" fill="#217488"/><rect x="920.20" y="549.20" width="4.30" height="4.40" fill="#181d1e"/><rect x="924.30" y="549.20" width="4.30" height="4.40" fill="#227a8f"/><rect x="928.40" y="549.20" width="4.30" height="4.40" fill="#227a90"/><rect x="936.60" y="549.20" width="4.30" height="4.40" fill="#21768a"/><rect x="940.70" y="549.20" width="4.30" height="4.40" fill="#21758a"/><rect x="944.80" y="549.20" width="4.30" height="4.40" fill="#192124"/><rect x="948.90" y="549.20" width="4.30" height="4.40" fill="#23879f"/><rect x="953.00" y="549.20" width="4.30" height="4.40" fill="#1e5361"/><rect x="957.10" y="549.20" width="4.30" height="4.40" fill="#238096"/><rect x="961.20" y="549.20" width="4.30" height="4.40" fill="#1f5a68"/><rect x="965.30" y="549.20" width="4.30" height="4.40" fill="#1a3035"/><rect x="969.40" y="549.20" width="4.30" height="4.40" fill="#23869e"/><rect x="973.50" y="549.20" width="4.30" height="4.40" fill="#206374"/><rect x="977.60" y="549.20" width="4.30" height="4.40" fill="#181e20"/><rect x="981.70" y="549.20" width="4.30" height="4.40" fill="#28aecf"/><rect x="985.80" y="549.20" width="4.30" height="4.40" fill="#19282c"/><rect x="989.90" y="549.20" width="4.30" height="4.40" fill="#269fbd"/><rect x="994.00" y="549.20" width="4.30" height="4.40" fill="#22798e"/><rect x="998.10" y="549.20" width="4.30" height="4.40" fill="#237f96"/><rect x="1002.20" y="549.20" width="4.30" height="4.40" fill="#1e515e"/><rect x="1006.30" y="549.20" width="4.30" height="4.40" fill="#2598b4"/><rect x="1010.40" y="549.20" width="4.30" height="4.40" fill="#1f6272"/><rect x="1014.50" y="549.20" width="4.30" height="4.40" fill="#1f5a68"/><rect x="1018.60" y="549.20" width="4.30" height="4.40" fill="#227c91"/><rect x="1022.70" y="549.20" width="4.30" height="4.40" fill="#217285"/><rect x="1026.80" y="549.20" width="4.30" height="4.40" fill="#1f5c6a"/><rect x="1030.90" y="549.20" width="4.30" height="4.40" fill="#22788d"/><rect x="1035.00" y="549.20" width="4.30" height="4.40" fill="#227c92"/><rect x="1039.10" y="549.20" width="4.30" height="4.40" fill="#1f5e6e"/><rect x="1043.20" y="549.20" width="4.30" height="4.40" fill="#1e5663"/><rect x="1055.50" y="549.20" width="4.30" height="4.40" fill="#238198"/><rect x="1059.60" y="549.20" width="4.30" height="4.40" fill="#181c1e"/><rect x="1067.80" y="549.20" width="4.30" height="4.40" fill="#21768a"/><rect x="1071.90" y="549.20" width="4.30" height="4.40" fill="#19282c"/><rect x="1076.00" y="549.20" width="4.30" height="4.40" fill="#216e81"/><rect x="1080.10" y="549.20" width="4.30" height="4.40" fill="#227d93"/><rect x="1084.20" y="549.20" width="4.30" height="4.40" fill="#206778"/><rect x="1088.30" y="549.20" width="4.30" height="4.40" fill="#20697b"/><rect x="1092.40" y="549.20" width="4.30" height="4.40" fill="#1d4b56"/><rect x="1096.50" y="549.20" width="4.30" height="4.40" fill="#22788d"/><rect x="1100.60" y="549.20" width="4.30" height="4.40" fill="#192326"/><rect x="1104.70" y="549.20" width="4.30" height="4.40" fill="#217084"/><rect x="1112.90" y="549.20" width="4.30" height="4.40" fill="#21768a"/><rect x="1121.10" y="549.20" width="4.30" height="4.40" fill="#248ea8"/><rect x="1125.20" y="549.20" width="4.30" height="4.40" fill="#227c91"/><rect x="1129.30" y="549.20" width="4.30" height="4.40" fill="#1b353c"/><rect x="1133.40" y="549.20" width="4.30" height="4.40" fill="#217589"/><rect x="1141.60" y="549.20" width="4.30" height="4.40" fill="#216d80"/><rect x="1145.70" y="549.20" width="4.30" height="4.40" fill="#182022"/><rect x="1149.80" y="549.20" width="4.30" height="4.40" fill="#238097"/><rect x="1153.90" y="549.20" width="4.30" height="4.40" fill="#217286"/><rect x="1158.00" y="549.20" width="4.30" height="4.40" fill="#217286"/><rect x="1162.10" y="549.20" width="4.30" height="4.40" fill="#1a2b30"/><rect x="1166.20" y="549.20" width="4.30" height="4.40" fill="#1d4a55"/><rect x="1170.30" y="549.20" width="4.30" height="4.40" fill="#1d4b56"/><rect x="1174.40" y="549.20" width="4.30" height="4.40" fill="#181d1f"/><rect x="1178.50" y="549.20" width="4.30" height="4.40" fill="#19272a"/><rect x="1182.60" y="549.20" width="4.30" height="4.40" fill="#206678"/><rect x="1186.70" y="549.20" width="4.30" height="4.40" fill="#1e5967"/><rect x="1190.80" y="549.20" width="4.30" height="4.40" fill="#248ca5"/><rect x="1194.90" y="549.20" width="4.30" height="4.40" fill="#1b373e"/><rect x="1199.00" y="549.20" width="4.30" height="4.40" fill="#27a8c8"/><rect x="686.50" y="553.40" width="4.30" height="4.40" fill="#1e5765"/><rect x="690.60" y="553.40" width="4.30" height="4.40" fill="#216f82"/><rect x="694.70" y="553.40" width="4.30" height="4.40" fill="#181a1b"/><rect x="698.80" y="553.40" width="4.30" height="4.40" fill="#1e5967"/><rect x="702.90" y="553.40" width="4.30" height="4.40" fill="#192225"/><rect x="707.00" y="553.40" width="4.30" height="4.40" fill="#1d4a55"/><rect x="715.20" y="553.40" width="4.30" height="4.40" fill="#206374"/><rect x="719.30" y="553.40" width="4.30" height="4.40" fill="#216f82"/><rect x="723.40" y="553.40" width="4.30" height="4.40" fill="#1b3c44"/><rect x="727.50" y="553.40" width="4.30" height="4.40" fill="#206576"/><rect x="731.60" y="553.40" width="4.30" height="4.40" fill="#1a3339"/><rect x="735.70" y="553.40" width="4.30" height="4.40" fill="#216e81"/><rect x="739.80" y="553.40" width="4.30" height="4.40" fill="#1c4049"/><rect x="743.90" y="553.40" width="4.30" height="4.40" fill="#1d4c57"/><rect x="752.10" y="553.40" width="4.30" height="4.40" fill="#1c3e47"/><rect x="756.20" y="553.40" width="4.30" height="4.40" fill="#206779"/><rect x="760.30" y="553.40" width="4.30" height="4.40" fill="#1c424b"/><rect x="764.40" y="553.40" width="4.30" height="4.40" fill="#1b373e"/><rect x="772.60" y="553.40" width="4.30" height="4.40" fill="#1f5a68"/><rect x="776.70" y="553.40" width="4.30" height="4.40" fill="#1d4751"/><rect x="780.80" y="553.40" width="4.30" height="4.40" fill="#1f6272"/><rect x="784.90" y="553.40" width="4.30" height="4.40" fill="#22778c"/><rect x="789.00" y="553.40" width="4.30" height="4.40" fill="#1d4e59"/><rect x="793.10" y="553.40" width="4.30" height="4.40" fill="#216e81"/><rect x="797.20" y="553.40" width="4.30" height="4.40" fill="#1a3339"/><rect x="801.30" y="553.40" width="4.30" height="4.40" fill="#22788e"/><rect x="805.40" y="553.40" width="4.30" height="4.40" fill="#1f5a69"/><rect x="809.50" y="553.40" width="4.30" height="4.40" fill="#1d4f5b"/><rect x="813.60" y="553.40" width="4.30" height="4.40" fill="#227d93"/><rect x="817.70" y="553.40" width="4.30" height="4.40" fill="#1e505d"/><rect x="821.80" y="553.40" width="4.30" height="4.40" fill="#182022"/><rect x="825.90" y="553.40" width="4.30" height="4.40" fill="#1a2b2f"/><rect x="830.00" y="553.40" width="4.30" height="4.40" fill="#227a90"/><rect x="834.10" y="553.40" width="4.30" height="4.40" fill="#1d4954"/><rect x="838.20" y="553.40" width="4.30" height="4.40" fill="#1f5b6a"/><rect x="842.30" y="553.40" width="4.30" height="4.40" fill="#206677"/><rect x="846.40" y="553.40" width="4.30" height="4.40" fill="#1c454f"/><rect x="850.50" y="553.40" width="4.30" height="4.40" fill="#206c7e"/><rect x="854.60" y="553.40" width="4.30" height="4.40" fill="#1b3941"/><rect x="858.70" y="553.40" width="4.30" height="4.40" fill="#217083"/><rect x="862.80" y="553.40" width="4.30" height="4.40" fill="#1e5663"/><rect x="866.90" y="553.40" width="4.30" height="4.40" fill="#206b7d"/><rect x="871.00" y="553.40" width="4.30" height="4.40" fill="#1f5a69"/><rect x="875.10" y="553.40" width="4.30" height="4.40" fill="#1d4d59"/><rect x="879.20" y="553.40" width="4.30" height="4.40" fill="#206475"/><rect x="883.30" y="553.40" width="4.30" height="4.40" fill="#1b3c44"/><rect x="887.40" y="553.40" width="4.30" height="4.40" fill="#1a2d31"/><rect x="891.50" y="553.40" width="4.30" height="4.40" fill="#1d4f5b"/><rect x="895.60" y="553.40" width="4.30" height="4.40" fill="#1f5a68"/><rect x="899.70" y="553.40" width="4.30" height="4.40" fill="#1d4751"/><rect x="903.80" y="553.40" width="4.30" height="4.40" fill="#1d4751"/><rect x="907.90" y="553.40" width="4.30" height="4.40" fill="#206b7d"/><rect x="912.00" y="553.40" width="4.30" height="4.40" fill="#1d4852"/><rect x="916.10" y="553.40" width="4.30" height="4.40" fill="#19262a"/><rect x="920.20" y="553.40" width="4.30" height="4.40" fill="#181b1b"/><rect x="924.30" y="553.40" width="4.30" height="4.40" fill="#22798f"/><rect x="928.40" y="553.40" width="4.30" height="4.40" fill="#1f5a69"/><rect x="936.60" y="553.40" width="4.30" height="4.40" fill="#21758a"/><rect x="940.70" y="553.40" width="4.30" height="4.40" fill="#1c4650"/><rect x="944.80" y="553.40" width="4.30" height="4.40" fill="#20697a"/><rect x="948.90" y="553.40" width="4.30" height="4.40" fill="#1a343a"/><rect x="953.00" y="553.40" width="4.30" height="4.40" fill="#227c92"/><rect x="957.10" y="553.40" width="4.30" height="4.40" fill="#23879f"/><rect x="961.20" y="553.40" width="4.30" height="4.40" fill="#1e515e"/><rect x="969.40" y="553.40" width="4.30" height="4.40" fill="#1f5d6c"/><rect x="973.50" y="553.40" width="4.30" height="4.40" fill="#206475"/><rect x="977.60" y="553.40" width="4.30" height="4.40" fill="#1c3f47"/><rect x="981.70" y="553.40" width="4.30" height="4.40" fill="#1d4751"/><rect x="985.80" y="553.40" width="4.30" height="4.40" fill="#1d4b56"/><rect x="989.90" y="553.40" width="4.30" height="4.40" fill="#206475"/><rect x="994.00" y="553.40" width="4.30" height="4.40" fill="#1e525e"/><rect x="998.10" y="553.40" width="4.30" height="4.40" fill="#23849c"/><rect x="1002.20" y="553.40" width="4.30" height="4.40" fill="#216f82"/><rect x="1006.30" y="553.40" width="4.30" height="4.40" fill="#1b3940"/><rect x="1010.40" y="553.40" width="4.30" height="4.40" fill="#20687a"/><rect x="1014.50" y="553.40" width="4.30" height="4.40" fill="#1a3137"/><rect x="1018.60" y="553.40" width="4.30" height="4.40" fill="#1d4f5b"/><rect x="1022.70" y="553.40" width="4.30" height="4.40" fill="#1d4c57"/><rect x="1026.80" y="553.40" width="4.30" height="4.40" fill="#1d4b56"/><rect x="1030.90" y="553.40" width="4.30" height="4.40" fill="#206c7e"/><rect x="1035.00" y="553.40" width="4.30" height="4.40" fill="#1b3b42"/><rect x="1039.10" y="553.40" width="4.30" height="4.40" fill="#206576"/><rect x="1043.20" y="553.40" width="4.30" height="4.40" fill="#1a3035"/><rect x="1055.50" y="553.40" width="4.30" height="4.40" fill="#1f5c6a"/><rect x="1059.60" y="553.40" width="4.30" height="4.40" fill="#217285"/><rect x="1063.70" y="553.40" width="4.30" height="4.40" fill="#181c1d"/><rect x="1067.80" y="553.40" width="4.30" height="4.40" fill="#206474"/><rect x="1071.90" y="553.40" width="4.30" height="4.40" fill="#1c434d"/><rect x="1076.00" y="553.40" width="4.30" height="4.40" fill="#20697b"/><rect x="1080.10" y="553.40" width="4.30" height="4.40" fill="#206677"/><rect x="1084.20" y="553.40" width="4.30" height="4.40" fill="#1e5361"/><rect x="1088.30" y="553.40" width="4.30" height="4.40" fill="#1f6171"/><rect x="1092.40" y="553.40" width="4.30" height="4.40" fill="#1c3e47"/><rect x="1096.50" y="553.40" width="4.30" height="4.40" fill="#20687a"/><rect x="1100.60" y="553.40" width="4.30" height="4.40" fill="#1b353c"/><rect x="1104.70" y="553.40" width="4.30" height="4.40" fill="#227b91"/><rect x="1108.80" y="553.40" width="4.30" height="4.40" fill="#1c424b"/><rect x="1112.90" y="553.40" width="4.30" height="4.40" fill="#1d4f5b"/><rect x="1121.10" y="553.40" width="4.30" height="4.40" fill="#1e525f"/><rect x="1125.20" y="553.40" width="4.30" height="4.40" fill="#1f6272"/><rect x="1129.30" y="553.40" width="4.30" height="4.40" fill="#192224"/><rect x="1133.40" y="553.40" width="4.30" height="4.40" fill="#1c454f"/><rect x="1141.60" y="553.40" width="4.30" height="4.40" fill="#1e5360"/><rect x="1149.80" y="553.40" width="4.30" height="4.40" fill="#1e5764"/><rect x="1153.90" y="553.40" width="4.30" height="4.40" fill="#217488"/><rect x="1158.00" y="553.40" width="4.30" height="4.40" fill="#1d4c58"/><rect x="1162.10" y="553.40" width="4.30" height="4.40" fill="#206a7d"/><rect x="1166.20" y="553.40" width="4.30" height="4.40" fill="#1b363d"/><rect x="1170.30" y="553.40" width="4.30" height="4.40" fill="#217488"/><rect x="1174.40" y="553.40" width="4.30" height="4.40" fill="#1e5968"/><rect x="1178.50" y="553.40" width="4.30" height="4.40" fill="#181d1e"/><rect x="1182.60" y="553.40" width="4.30" height="4.40" fill="#217489"/><rect x="1186.70" y="553.40" width="4.30" height="4.40" fill="#1e5664"/><rect x="1190.80" y="553.40" width="4.30" height="4.40" fill="#206c7f"/><rect x="1194.90" y="553.40" width="4.30" height="4.40" fill="#1c434d"/><rect x="1199.00" y="553.40" width="4.30" height="4.40" fill="#22798f"/><rect x="953.00" y="557.60" width="4.30" height="4.40" fill="#1e5764"/><rect x="957.10" y="557.60" width="4.30" height="4.40" fill="#1a3339"/><rect x="998.10" y="557.60" width="4.30" height="4.40" fill="#1b3940"/></svg><!--/TBLUR-->
<div id="stickyshadow" class="abs"></div>
<div id="redbox" class="abs"></div>
<div id="dot" class="abs"></div>
<div id="cursor" class="abs"></div>
</body></html>
